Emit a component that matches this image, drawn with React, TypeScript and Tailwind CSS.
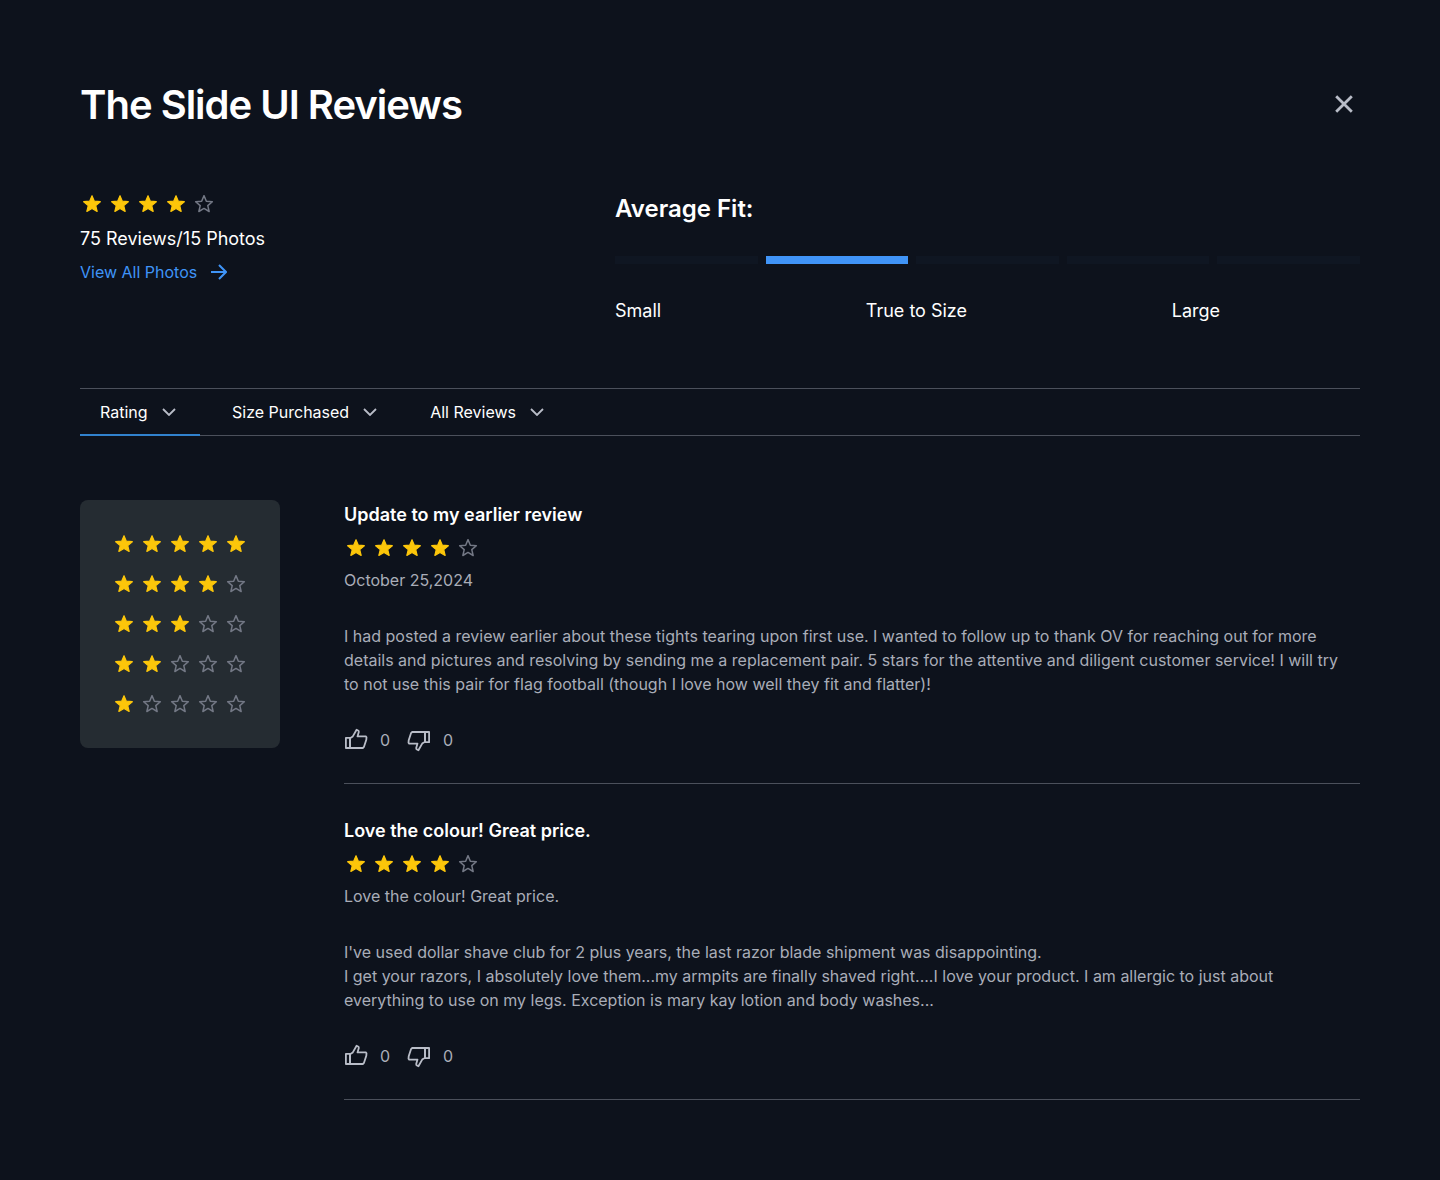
import React from "react";

const STAR = "M12 17.27 18.18 21l-1.64-7.03L22 9.24l-7.19-.61L12 2 9.19 8.63 2 9.24l5.46 4.73L5.82 21z";

function Stars({ value }: { value: number }) {
  return (
    <div className="flex h-6 gap-1" role="img" aria-label={`${value} out of 5 stars`}>
      {[1, 2, 3, 4, 5].map((n) => (
        <span key={n} className="flex size-6 items-center justify-center">
          {n <= value ? (
            <svg viewBox="0 0 24 24" className="size-5 fill-[#fcc60a] stroke-[#fcc60a]" strokeWidth="1.4" strokeLinejoin="round">
              <path d={STAR} />
            </svg>
          ) : (
            <svg viewBox="0 0 24 24" className="size-5 fill-none stroke-[#737885]" strokeWidth="1.8" strokeLinejoin="round">
              <path d={STAR} />
            </svg>
          )}
        </span>
      ))}
    </div>
  );
}

function Thumb({ className = "" }: { className?: string }) {
  return (
    <svg
      viewBox="0 0 24 24"
      className={`size-6 fill-none stroke-[#b9bdc8] ${className}`}
      strokeWidth="1.8"
      strokeLinejoin="round"
      aria-hidden="true"
    >
      <path d="M1.9 9.8H6V20H1.9z" />
      <path d="M6 10.2 8.8 8.4l3.8-6.6 1.9.9.3 1.3-1.3 4.4h8.3l.7.9-.2 2.5-2.3 7-1.2 1.2H6z" />
    </svg>
  );
}

function Chevron() {
  return (
    <svg viewBox="0 0 14 8" className="h-2 w-3.5 fill-none stroke-[#b9bdc8]" strokeWidth="1.8" aria-hidden="true">
      <path d="m1 1 6 6 6-6" />
    </svg>
  );
}

function Review({ title, rating, subtitle, body }: { title: string; rating: number; subtitle: string; body: string[] }) {
  return (
    <article className="border-b border-[#4b505b] pb-[31px]">
      <h2 className="text-lg leading-[30px] font-semibold text-white">{title}</h2>
      <div className="mt-1.5">
        <Stars value={rating} />
      </div>
      <p className="mt-2 leading-6">{subtitle}</p>
      <div className="mt-8 pr-2 leading-6">
        {body.map((p) => (
          <p key={p}>{p}</p>
        ))}
      </div>
      <div className="mt-8 flex gap-[17px]">
        <button type="button" aria-label="Helpful" className="flex items-center gap-3 leading-6">
          <Thumb />0
        </button>
        <button type="button" aria-label="Not helpful" className="flex items-center gap-3 leading-6">
          <Thumb className="rotate-180" />0
        </button>
      </div>
    </article>
  );
}

export default function App() {
  return (
    <main className="min-h-screen bg-[#0d121c] p-20 font-['Inter',sans-serif] text-base text-[#a9adb8]">
      <header className="flex h-12 items-center justify-between pr-1">
        <h1 className="pt-0.5 text-[40px] leading-[48px] font-semibold tracking-tight text-white">The Slide UI Reviews</h1>
        <button type="button" aria-label="Close" className="flex size-6 items-center justify-center">
          <svg viewBox="0 0 18 18" className="size-[18px] fill-none stroke-[#b9bdc8]" strokeWidth="2.8">
            <path d="m1.2 1.2 15.6 15.6m0-15.6L1.2 16.8" />
          </svg>
        </button>
      </header>

      <section className="mt-16 grid grid-cols-[535px_1fr]">
        <div>
          <Stars value={4} />
          <p className="mt-2 text-lg leading-[30px] text-white">75 Reviews/15 Photos</p>
          <a href="#photos" className="mt-1.5 inline-flex items-center gap-3.5 leading-6 text-[#3f94f7]">
            View All Photos
            <svg viewBox="0 0 16 16" className="size-4 fill-none stroke-current" strokeWidth="2" aria-hidden="true">
              <path d="M0 8h15M8 1l7 7-7 7" />
            </svg>
          </a>
        </div>
        <div>
          <h2 className="text-2xl leading-[34px] font-semibold text-white">Average Fit:</h2>
          <div className="mt-[30px] grid grid-cols-5 gap-2">
            <div className="h-2 bg-[#0f1622]" />
            <div className="h-2 bg-[#4094f7]" />
            <div className="h-2 bg-[#0f1622]" />
            <div className="h-2 bg-[#0f1622]" />
            <div className="h-2 bg-[#0f1622]" />
          </div>
          <div className="mt-8 flex justify-between pr-[140px] text-lg leading-[30px] text-white">
            <span>Small</span>
            <span>True to Size</span>
            <span>Large</span>
          </div>
        </div>
      </section>

      <nav className="mt-[62px] flex h-12 border-y border-[#4b505b] text-white">
        <button type="button" className="-mb-px flex w-[120px] items-center gap-3.5 border-b-2 border-[#3182ce] pl-5">
          Rating
          <Chevron />
        </button>
        <button type="button" className="ml-8 flex items-center gap-3.5">
          Size Purchased
          <Chevron />
        </button>
        <button type="button" className="ml-[53px] flex items-center gap-3.5">
          All Reviews
          <Chevron />
        </button>
      </nav>

      <div className="mt-16 flex items-start gap-16">
        <aside className="flex w-[200px] shrink-0 flex-col items-center gap-4 rounded-lg bg-[#252c32] py-8">
          {[5, 4, 3, 2, 1].map((n) => (
            <button key={n} type="button">
              <Stars value={n} />
            </button>
          ))}
        </aside>
        <div className="flex min-w-0 flex-1 flex-col gap-8">
          <Review
            title="Update to my earlier review"
            rating={4}
            subtitle="October 25,2024"
            body={[
              "I had posted a review earlier about these tights tearing upon first use. I wanted to follow up to thank OV for reaching out for more details and pictures and resolving by sending me a replacement pair. 5 stars for the attentive and diligent customer service! I will try to not use this pair for flag football (though I love how well they fit and flatter)!",
            ]}
          />
          <Review
            title="Love the colour! Great price."
            rating={4}
            subtitle="Love the colour! Great price."
            body={[
              "I've used dollar shave club for 2 plus years, the last razor blade shipment was disappointing.",
              "I get your razors, I absolutely love them...my armpits are finally shaved right....I love your product. I am allergic to just about everything to use on my legs. Exception is mary kay lotion and body washes...",
            ]}
          />
        </div>
      </div>
    </main>
  );
}
